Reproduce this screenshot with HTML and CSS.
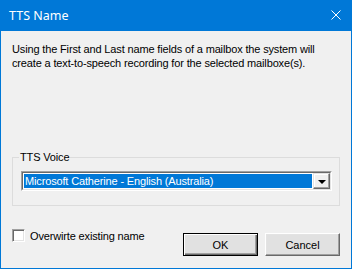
FILE: index.html
```html
<!DOCTYPE html>
<html lang="en">
<head>
  <meta charset="UTF-8"/>
  <title>TTS Name</title>
  <link rel="stylesheet" href="styles.css">
</head>
<body>
  <div class="window">
    <div class="titlebar">
      <span class="title">TTS Name</span>
      <svg class="close" width="10" height="10" viewBox="0 0 10 10">
        <path d="M0.5 0.5 L9.5 9.5 M9.5 0.5 L0.5 9.5" stroke="#fff" stroke-width="1" fill="none"/>
      </svg>
    </div>

    <div class="content">
      <p class="intro">Using the First and Last name fields of a mailbox the system will create a text-to-speech recording for the selected mailboxe(s).</p>

      <fieldset class="group">
        <legend>TTS Voice</legend>
        <div class="combo">
          <div class="combo-inner">
            <div class="combo-value">Microsoft Catherine - English (Australia)</div>
            <div class="combo-btn"><span class="arrow"></span></div>
          </div>
        </div>
      </fieldset>

      <div class="footer">
        <label class="check">
          <span class="box"></span>
          <span>Overwirte existing name</span>
        </label>
        <div class="buttons">
          <button class="btn default">OK</button>
          <button class="btn">Cancel</button>
        </div>
      </div>
    </div>
  </div>
</body>
</html>
```

FILE: styles.css
```css
:root {
  --blue: #0078d7;
  --face: #f0f0f0;
  --shadow: #a0a0a0;
  --dark: #696969;
  --light: #e3e3e3;
}
* { box-sizing: border-box }
body {
  margin: 0;
  background: #fff;
}
.window {
  width: 352px;
  height: 269px;
  border: 1px solid var(--blue);
  border-top: none;
  background: var(--face);
  font: 11px "Liberation Sans", Arial, sans-serif;
  letter-spacing: -0.15px;
  color: #000;
}
.titlebar {
  height: 31px;
  background: var(--blue);
  color: #fff;
  display: flex;
  align-items: center;
  justify-content: space-between;
  padding: 0 10px 0 8px;
  font: 12.5px "Noto Sans", sans-serif;
  letter-spacing: 0;
}
.close { display: block; margin-top: -1px }

.content { padding: 11px 11px 0 11px }
.intro {
  margin: 0;
  line-height: 14px;
}

.group {
  margin: 80px 0 0 0;
  padding: 7px 7px 14px 8px;
  border: 1px solid #dcdcdc;
  min-width: 0;
}
.group legend {
  padding: 0 1px;
  margin-left: -2px;
  line-height: 14px;
}

.combo {
  height: 20px;
  border: 1px solid;
  border-color: var(--shadow) #fff #fff var(--shadow);
}
.combo-inner {
  height: 100%;
  display: flex;
  background: #fff;
  border: 1px solid;
  border-color: var(--dark) var(--light) var(--light) var(--dark);
}
.combo-value {
  flex: 1;
  margin: 1px;
  padding-left: 1px;
  background: var(--blue);
  color: #fff;
  line-height: 14px;
  white-space: nowrap;
}
.combo-btn {
  width: 17px;
  display: flex;
  align-items: center;
  justify-content: center;
  background: var(--face);
  border: 1px solid;
  border-color: var(--light) var(--dark) var(--dark) var(--light);
  box-shadow: inset -1px -1px 0 var(--shadow), inset 1px 1px 0 #fff;
}
.arrow {
  width: 0;
  height: 0;
  border-left: 4px solid transparent;
  border-right: 4px solid transparent;
  border-top: 4px solid #000;
  margin-top: 1px;
}

.footer {
  display: flex;
  align-items: flex-start;
  margin-top: 23px;
}
.check {
  display: flex;
  align-items: center;
  gap: 5px;
  height: 13px;
  line-height: 14px;
}
.box {
  width: 13px;
  height: 13px;
  background: #fff;
  border: 1px solid;
  border-color: var(--shadow) #fff #fff var(--shadow);
  box-shadow: inset 1px 1px 0 var(--dark), inset -1px -1px 0 var(--light);
}
.buttons {
  margin-left: auto;
  margin-top: 4px;
  display: flex;
  gap: 7px;
}
.btn {
  width: 75px;
  height: 23px;
  padding: 0;
  font: inherit;
  color: #000;
  background: #e1e1e1;
  border: 1px solid;
  border-color: #fff var(--dark) var(--dark) #fff;
  box-shadow: inset -1px -1px 0 var(--shadow), inset 1px 1px 0 var(--light);
}
.btn.default {
  border: 1px solid #000;
  box-shadow: inset 1px 1px 0 #fff, inset -1px -1px 0 var(--dark), inset -2px -2px 0 var(--shadow);
}
```
